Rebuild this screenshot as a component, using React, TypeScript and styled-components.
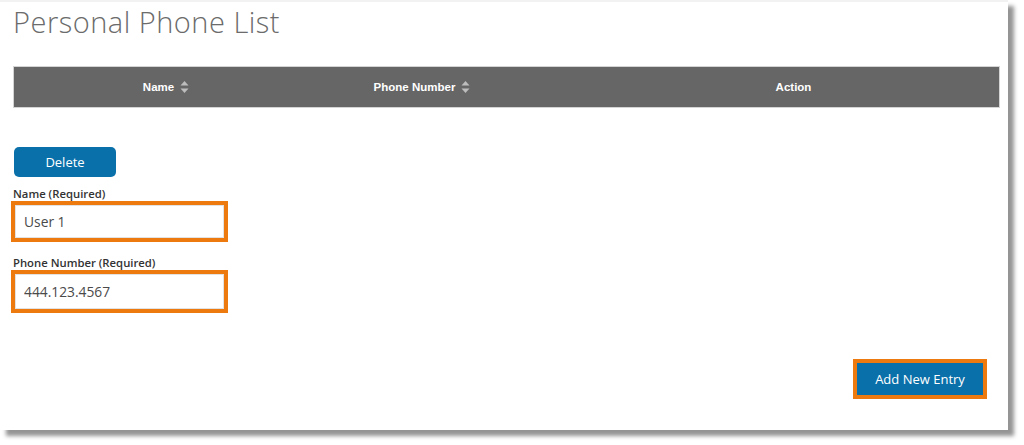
import React from 'react';
import styled, { createGlobalStyle } from 'styled-components';

const GlobalStyle = createGlobalStyle`
  html, body {
    margin: 0;
    padding: 0;
    background: #ffffff;
  }
  body {
    font-family: 'Open Sans', 'Liberation Sans', sans-serif;
  }
`;

const Page = styled.div`
  width: 1024px;
  height: 445px;
  overflow: hidden;
  background: #ffffff;
`;

const Card = styled.div`
  box-sizing: border-box;
  width: 1008px;
  height: 430px;
  background: #ffffff;
  border-top: 2px solid #f2f2f2;
  box-shadow: 6px 6px 4px rgba(0, 0, 0, 0.42);
  padding: 0 8px 0 13px;
  display: flex;
  flex-direction: column;
`;

const Title = styled.h1`
  margin: 0;
  font-family: 'Open Sans', sans-serif;
  font-weight: 300;
  font-size: 29px;
  line-height: 39px;
  color: #6b6b6b;
  letter-spacing: 0.5px;
`;

const TableHead = styled.div`
  margin-top: 25px;
  height: 42px;
  box-sizing: border-box;
  background: #666666;
  border: 1px solid #d4d4d4;
  display: grid;
  grid-template-columns: 304px 208px 1fr;
  align-items: center;
`;

const HeadCell = styled.div<{ $shift?: number }>`
  display: flex;
  justify-content: center;
  align-items: center;
  gap: 6px;
  padding-left: ${(p) => p.$shift ?? 0}px;
  font-family: 'Liberation Sans', sans-serif;
  font-weight: 700;
  font-size: 11.5px;
  color: #ffffff;
`;

const SortIcon = () => (
  <svg width="9" height="14" viewBox="0 0 9 14">
    <path d="M4.5 1 L8.5 5.5 L0.5 5.5 Z" fill="#bdbdbd" />
    <path d="M4.5 13 L8.5 8.5 L0.5 8.5 Z" fill="#bdbdbd" />
  </svg>
);

const DeleteButton = styled.button`
  margin-top: 39px;
  margin-left: 1px;
  width: 102px;
  height: 30px;
  border: none;
  border-radius: 5px;
  background: #0a70aa;
  color: #ffffff;
  font-family: 'Open Sans', sans-serif;
  font-size: 13px;
  cursor: pointer;
`;

const Field = styled.div<{ $top: number }>`
  margin-top: ${(p) => p.$top}px;
  display: flex;
  flex-direction: column;
  align-items: flex-start;
`;

const Label = styled.label`
  font-family: 'Open Sans', sans-serif;
  font-weight: 600;
  font-size: 11.3px;
  line-height: 15px;
  color: #333333;
`;

const Highlight = styled.div<{ $h: number }>`
  box-sizing: border-box;
  margin-left: -2px;
  width: 217px;
  height: ${(p) => p.$h}px;
  border: 4px solid #ec7a0e;
  background: #ffffff;
`;

const Input = styled.input`
  box-sizing: border-box;
  width: 100%;
  height: 100%;
  border: 1px solid #e2e2e2;
  padding: 0 8px;
  font-family: 'Open Sans', sans-serif;
  font-size: 13.8px;
  color: #4a4a4a;
  outline: none;
`;

const Footer = styled.div`
  margin-top: 46px;
  display: flex;
  justify-content: flex-end;
  padding-right: 13px;
`;

const AddOutline = styled.div`
  border: 4px solid #ec7a0e;
  display: flex;
`;

const AddButton = styled.button`
  width: 126px;
  height: 32px;
  border: none;
  background: #0a70aa;
  color: #ffffff;
  font-family: 'Open Sans', sans-serif;
  font-size: 13px;
  cursor: pointer;
`;

const App: React.FC = () => {
  return (
    <Page>
      <GlobalStyle />
      <Card>
        <Title>Personal Phone List</Title>
        <TableHead>
          <HeadCell>
            Name <SortIcon />
          </HeadCell>
          <HeadCell>
            Phone Number <SortIcon />
          </HeadCell>
          <HeadCell $shift={62}>Action</HeadCell>
        </TableHead>
        <div>
          <DeleteButton>Delete</DeleteButton>
        </div>
        <Field $top={9}>
          <Label>Name (Required)</Label>
          <Highlight $h={41}>
            <Input defaultValue="User 1" />
          </Highlight>
        </Field>
        <Field $top={13}>
          <Label>Phone Number (Required)</Label>
          <Highlight $h={43}>
            <Input defaultValue="444.123.4567" />
          </Highlight>
        </Field>
        <Footer>
          <AddOutline>
            <AddButton>Add New Entry</AddButton>
          </AddOutline>
        </Footer>
      </Card>
    </Page>
  );
};

export default App;
